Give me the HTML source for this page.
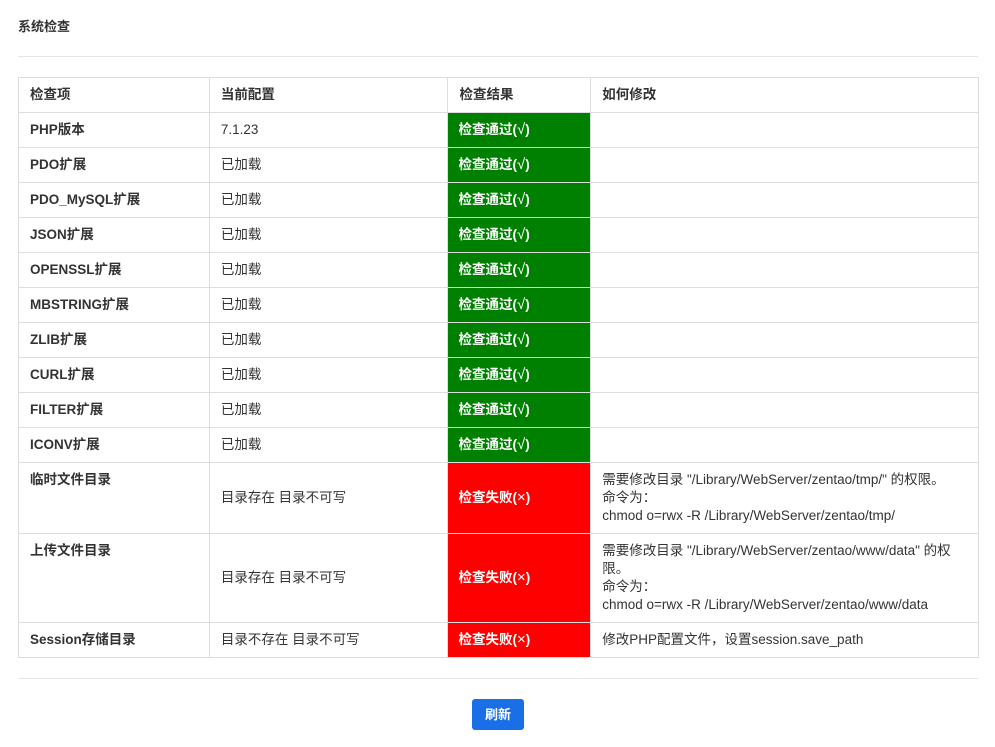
<!DOCTYPE html>
<html><head><meta charset="utf-8"><style>
body{margin:0;background:#fff;font-family:"Liberation Sans","Noto Sans CJK SC",sans-serif;font-size:13px;color:#333;}
.title{position:absolute;left:18px;top:18px;font-weight:bold;font-size:13px;line-height:18px;}
.hr{position:absolute;left:18px;width:960px;height:1px;background:#e5e5e5;}
table{position:absolute;left:18px;top:77px;width:961px;border-collapse:collapse;}
td{border:1px solid #ddd;padding:0 11px;line-height:18px;height:34px;box-sizing:border-box;vertical-align:middle;font-size:13.5px;}
td.n{font-weight:bold;}
tr.h td{font-weight:bold;}
.ok{background:#008000;color:#fff;font-weight:bold;padding-left:10px;}
.bad{background:#f00;color:#fff;font-weight:bold;padding-left:10px;}
.ok span,.bad span{font-size:15px;font-weight:normal;}
td.top{vertical-align:top;padding-top:8px;}
.btn{position:absolute;left:472px;top:699px;width:52px;height:31px;background:#1a6ee6;color:#fff;font-weight:bold;border-radius:3px;text-align:center;line-height:31px;font-size:13px;}
</style></head><body>
<div class="title">系统检查</div>
<div class="hr" style="top:56px"></div>
<table>
<colgroup><col style="width:191px"><col style="width:239px"><col style="width:143px"><col style="width:388px"></colgroup>
<tr class="h" style="height:35px"><td>检查项</td><td>当前配置</td><td>检查结果</td><td>如何修改</td></tr>
<tr style="height:35px"><td class="n">PHP版本</td><td>7.1.23</td><td class="ok">检查通过(<span>√</span>)</td><td></td></tr>
<tr style="height:35px"><td class="n">PDO扩展</td><td>已加载</td><td class="ok">检查通过(<span>√</span>)</td><td></td></tr>
<tr style="height:35px"><td class="n">PDO_MySQL扩展</td><td>已加载</td><td class="ok">检查通过(<span>√</span>)</td><td></td></tr>
<tr style="height:35px"><td class="n">JSON扩展</td><td>已加载</td><td class="ok">检查通过(<span>√</span>)</td><td></td></tr>
<tr style="height:35px"><td class="n">OPENSSL扩展</td><td>已加载</td><td class="ok">检查通过(<span>√</span>)</td><td></td></tr>
<tr style="height:35px"><td class="n">MBSTRING扩展</td><td>已加载</td><td class="ok">检查通过(<span>√</span>)</td><td></td></tr>
<tr style="height:35px"><td class="n">ZLIB扩展</td><td>已加载</td><td class="ok">检查通过(<span>√</span>)</td><td></td></tr>
<tr style="height:35px"><td class="n">CURL扩展</td><td>已加载</td><td class="ok">检查通过(<span>√</span>)</td><td></td></tr>
<tr style="height:35px"><td class="n">FILTER扩展</td><td>已加载</td><td class="ok">检查通过(<span>√</span>)</td><td></td></tr>
<tr style="height:35px"><td class="n">ICONV扩展</td><td>已加载</td><td class="ok">检查通过(<span>√</span>)</td><td></td></tr>
<tr style="height:71px"><td class="n top">临时文件目录</td><td>目录存在 目录不可写</td><td class="bad">检查失败(<span>×</span>)</td><td>需要修改目录 "/Library/WebServer/zentao/tmp/" 的权限。<br>命令为：<br>chmod o=rwx -R /Library/WebServer/zentao/tmp/</td></tr>
<tr style="height:89px"><td class="n top">上传文件目录</td><td>目录存在 目录不可写</td><td class="bad">检查失败(<span>×</span>)</td><td>需要修改目录 "/Library/WebServer/zentao/www/data" 的权<br>限。<br>命令为：<br>chmod o=rwx -R /Library/WebServer/zentao/www/data</td></tr>
<tr style="height:35px"><td class="n">Session存储目录</td><td>目录不存在 目录不可写</td><td class="bad">检查失败(<span>×</span>)</td><td>修改PHP配置文件，设置session.save_path</td></tr>
</table>
<div class="hr" style="top:678px"></div>
<div class="btn">刷新</div>
</body></html>
